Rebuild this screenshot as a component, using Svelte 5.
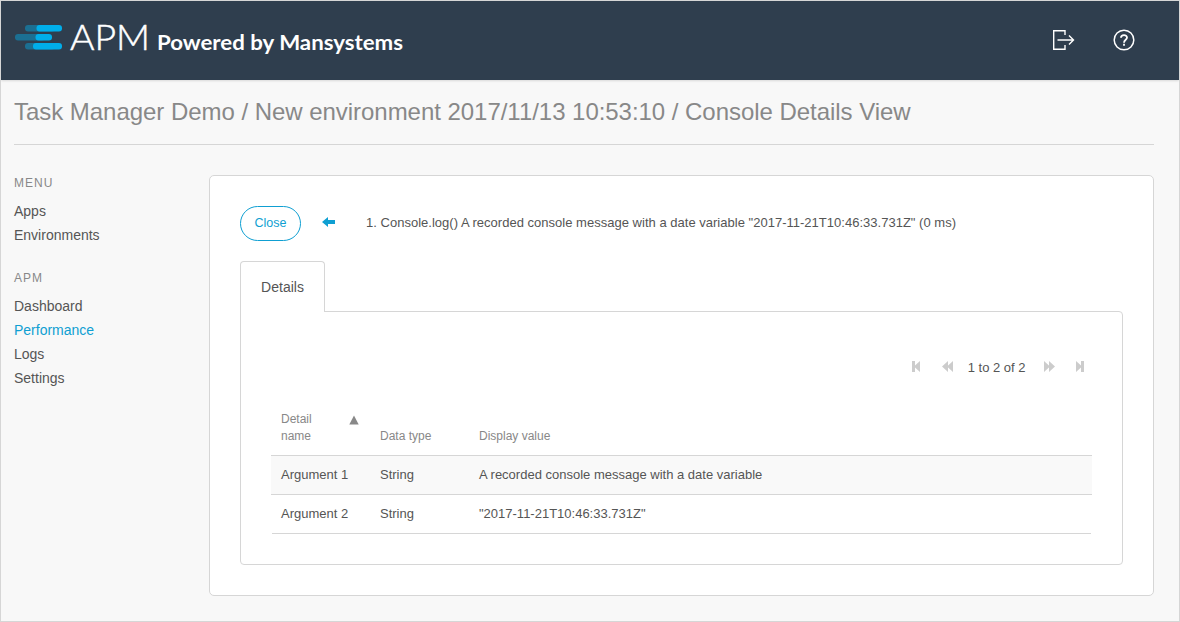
<script>
  const menus = [
    { title: 'MENU', items: ['Apps', 'Environments'] },
    { title: 'APM', items: ['Dashboard', 'Performance', 'Logs', 'Settings'] }
  ];
  const active = 'Performance';
  const rows = [
    ['Argument 1', 'String', 'A recorded console message with a date variable'],
    ['Argument 2', 'String', '"2017-11-21T10:46:33.731Z"']
  ];
</script>

<div class="page">
  <header>
    <svg class="logo" width="400" height="60" viewBox="0 0 400 60">
      <g fill="#1b6f92">
        <rect x="10" y="15" width="30" height="6.4" rx="3" />
        <rect x="0" y="24" width="30" height="6.4" rx="3" />
        <rect x="10" y="33" width="30" height="6.4" rx="3" />
      </g>
      <g fill="#00aeea">
        <rect x="21.5" y="15" width="25.5" height="6.4" rx="3" />
        <rect x="20.5" y="24" width="16.5" height="6.4" rx="3" />
        <rect x="18" y="33" width="29" height="6.4" rx="3" />
      </g>
      <text class="brand" x="55" y="39.5" textLength="80" lengthAdjust="spacingAndGlyphs">APM</text>
      <text class="tag" x="142" y="39.6" textLength="246" lengthAdjust="spacingAndGlyphs">Powered by Mansystems</text>
    </svg>
    <div class="actions">
      <svg width="24" height="22" viewBox="0 0 24 22" fill="none" stroke="#fff" stroke-width="1.4">
        <path d="M13 6V1.7H1.7V20.3H13V16M5.5 11H21.5M17 6.5L21.5 11L17 15.5" />
      </svg>
      <svg width="22" height="22" viewBox="0 0 22 22" fill="none" stroke="#fff" stroke-width="1.5">
        <circle cx="11" cy="11" r="9.8" />
        <path stroke-width="1.8" d="M8 8.8C8 5.2 14 5.2 14 8.6C14 10.8 11 10.8 11 13.7M11 14.8V16.8" />
      </svg>
    </div>
  </header>

  <h1>Task Manager Demo / New environment 2017/11/13 10:53:10 / Console Details View</h1>

  <div class="body">
    <nav>
      {#each menus as menu}
        <section>
          <h2>{menu.title}</h2>
          {#each menu.items as item}
            <div class="item" class:active={item === active}>{item}</div>
          {/each}
        </section>
      {/each}
    </nav>

    <main>
      <div class="bar">
        <button>Close</button>
        <svg class="back" width="14" height="10" viewBox="0 0 14 10" fill="#0f9fd2">
          <path d="M0 5L6 0V3H13V7H6V10Z" />
        </svg>
        <span class="message">1. Console.log() A recorded console message with a date variable "2017-11-21T10:46:33.731Z" (0 ms)</span>
      </div>
      <div class="tab">Details</div>
      <div class="panel">
        <div class="pager">
          <svg width="9" height="11" viewBox="0 0 9 11"><path d="M0 0H3V4.5L8 0V11L3 6.5V11H0Z" /></svg>
          <svg class="prev" width="12" height="11" viewBox="0 0 12 11"><path d="M6 0V11L0 5.5ZM11 0V11L5 5.5Z" /></svg>
          <span>1 to 2 of 2</span>
          <svg class="next" width="12" height="11" viewBox="0 0 12 11"><path d="M0 0V11L6 5.5ZM5 0V11L11 5.5Z" /></svg>
          <svg width="9" height="11" viewBox="0 0 9 11"><path d="M0 0L5 4.5V0H8V11H5V6.5L0 11Z" /></svg>
        </div>
        <div class="table">
          <div class="row head">
            <div class="sorted">
              <span>Detail<br />name</span>
              <svg width="10" height="10" viewBox="0 0 10 10"><path d="M5 0.5L9.7 9.5H0.3Z" fill="#888" /></svg>
            </div>
            <div>Data type</div>
            <div>Display value</div>
          </div>
          {#each rows as row}
            <div class="row">
              {#each row as cell}<div>{cell}</div>{/each}
            </div>
          {/each}
        </div>
      </div>
    </main>
  </div>
</div>

<style>
  :global(body) { margin: 0; }
  .page {
    box-sizing: border-box;
    width: 1180px;
    height: 622px;
    border: 1px solid #d6d6d6;
    background: #f8f8f8;
    color: #555;
    font-family: "Liberation Sans", Arial, sans-serif;
    font-size: 13px;
    overflow: hidden;
  }
  header {
    box-sizing: border-box;
    height: 79px;
    padding: 9px 44px 0 14px;
    display: flex;
    justify-content: space-between;
    background: #2f3e4e;
    box-shadow: 0 1px 2px rgba(0, 0, 0, 0.12);
  }
  .logo { overflow: visible; fill: #fff; }
  .brand { font: 300 35px Lato, sans-serif; stroke: #fff; stroke-width: 0.5px; }
  .tag { font: 700 20px Lato, sans-serif; }
  .actions { display: flex; gap: 37px; padding-top: 19px; }
  h1 {
    margin: 0 25px 0 13px;
    height: 64px;
    border-bottom: 1px solid #d6d6d6;
    font-size: 24px;
    font-weight: 400;
    line-height: 64px;
    letter-spacing: -0.038px;
    color: #888;
    white-space: nowrap;
  }
  .body { display: flex; padding: 30px 25px 0 13px; }
  nav { width: 195px; flex: none; }
  section { margin-bottom: 23px; }
  h2 {
    margin: 0 0 8px;
    padding-top: 1px;
    font-size: 12px;
    line-height: 15px;
    font-weight: 400;
    letter-spacing: 1px;
    color: #888;
  }
  .item { font-size: 14px; line-height: 24px; }
  .active { color: #0f9fd2; }
  main {
    box-sizing: border-box;
    width: 945px;
    height: 421px;
    padding: 30px;
    border: 1px solid #d6d6d6;
    border-radius: 5px;
    background: #fff;
  }
  .bar { display: flex; align-items: center; height: 35px; }
  button {
    box-sizing: border-box;
    width: 61px;
    height: 35px;
    padding: 0 0 2px;
    border: 1px solid #0f9fd2;
    border-radius: 18px;
    background: #fff;
    color: #0f9fd2;
    font: inherit;
    font-size: 12.5px;
  }
  .back { margin: 0 30px 3px 21px; }
  .message { white-space: nowrap; padding-bottom: 2px; letter-spacing: 0.015px; }
  .tab {
    box-sizing: border-box;
    position: relative;
    width: 85px;
    height: 51px;
    margin: 20px 0 -1px;
    border: 1px solid #d6d6d6;
    border-bottom: 0;
    border-radius: 4px 4px 0 0;
    background: #fff;
    font-size: 14px;
    line-height: 50px;
    text-align: center;
  }
  .panel {
    box-sizing: border-box;
    height: 254px;
    padding: 45px 30px 0;
    border: 1px solid #d6d6d6;
    border-radius: 0 4px 4px 4px;
  }
  .pager {
    display: flex;
    justify-content: flex-end;
    align-items: center;
    height: 20px;
    padding-right: 7px;
    fill: #ccc;
  }
  .pager svg { margin-bottom: 2px; }
  .pager span { line-height: 20px; padding-top: 2px; }
  .pager .prev { margin-left: 21px; margin-right: 14px; }
  .pager .next { margin-left: 18px; margin-right: 20px; }
  .pager { padding-right: 7.5px; }
  .table { margin-top: 24px; }
  .row {
    display: grid;
    grid-template-columns: 99px 99px 1fr;
    box-sizing: border-box;
    height: 39px;
    padding-left: 10px;
    line-height: 38px;
    border-bottom: 1px solid #d6d6d6;
  }
  .row:nth-child(2) { background: #f9f9f9; }
  .row:last-child { margin: 0 1px; padding-left: 9px; }
  .head {
    height: 55px;
    padding-bottom: 10px;
    align-items: end;
    font-size: 12px;
    line-height: 17px;
    color: #888;
  }
  .sorted { display: flex; justify-content: space-between; padding-right: 21px; }
  .sorted svg { margin-top: 4px; }
</style>
